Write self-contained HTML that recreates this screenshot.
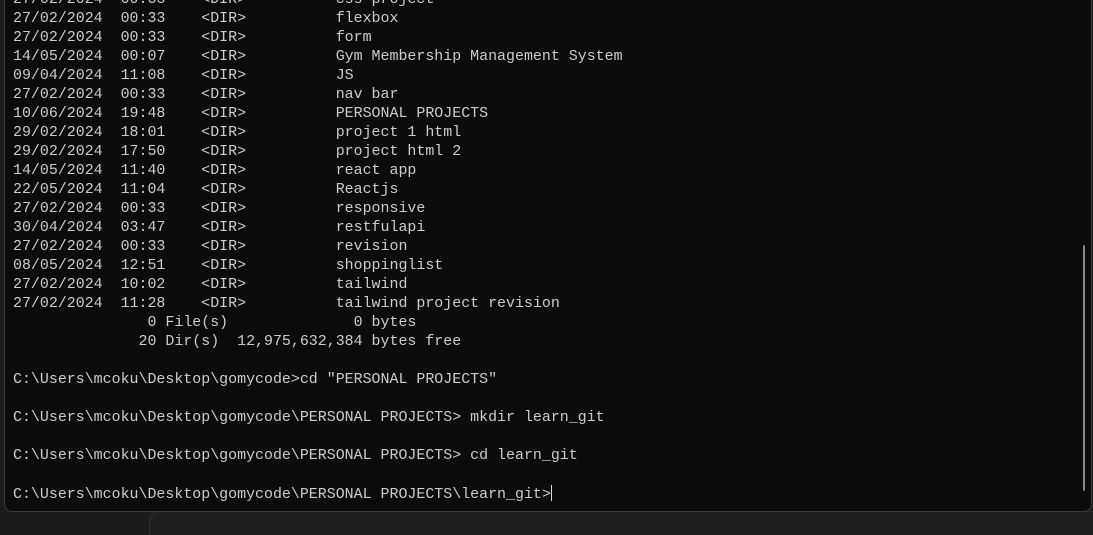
<!DOCTYPE html>
<html><head><style>
html,body{margin:0;padding:0;width:1093px;height:535px;overflow:hidden;background:#1b1b1b;position:relative;}
.win{position:absolute;left:4px;top:-10px;width:1086px;height:520px;background:#0c0c0c;border:1px solid #3a3a3a;border-radius:0 0 8px 8px;overflow:hidden;}
.win2{position:absolute;left:149px;top:511px;width:960px;height:40px;background:#1f1f1f;border:1px solid #2e2e2e;border-radius:10px;}
pre{position:absolute;left:8px;top:-0.5px;margin:0;font-family:"Liberation Mono",monospace;font-size:14.95px;line-height:19px;color:#cccccc;}
.sb{position:absolute;left:1083px;top:245px;width:2px;height:246px;background:#8a8a8a;border-radius:1px;}
.cur{display:inline-block;width:1px;height:16px;background:#ddd;vertical-align:-3px;}
</style></head><body>
<div class="win2"></div>
<div class="win">
<pre>27/02/2024  00:33    &lt;DIR&gt;          css project
27/02/2024  00:33    &lt;DIR&gt;          flexbox
27/02/2024  00:33    &lt;DIR&gt;          form
14/05/2024  00:07    &lt;DIR&gt;          Gym Membership Management System
09/04/2024  11:08    &lt;DIR&gt;          JS
27/02/2024  00:33    &lt;DIR&gt;          nav bar
10/06/2024  19:48    &lt;DIR&gt;          PERSONAL PROJECTS
29/02/2024  18:01    &lt;DIR&gt;          project 1 html
29/02/2024  17:50    &lt;DIR&gt;          project html 2
14/05/2024  11:40    &lt;DIR&gt;          react app
22/05/2024  11:04    &lt;DIR&gt;          Reactjs
27/02/2024  00:33    &lt;DIR&gt;          responsive
30/04/2024  03:47    &lt;DIR&gt;          restfulapi
27/02/2024  00:33    &lt;DIR&gt;          revision
08/05/2024  12:51    &lt;DIR&gt;          shoppinglist
27/02/2024  10:02    &lt;DIR&gt;          tailwind
27/02/2024  11:28    &lt;DIR&gt;          tailwind project revision
               0 File(s)              0 bytes
              20 Dir(s)  12,975,632,384 bytes free

C:\Users\mcoku\Desktop\gomycode&gt;cd "PERSONAL PROJECTS"

C:\Users\mcoku\Desktop\gomycode\PERSONAL PROJECTS&gt; mkdir learn_git

C:\Users\mcoku\Desktop\gomycode\PERSONAL PROJECTS&gt; cd learn_git

C:\Users\mcoku\Desktop\gomycode\PERSONAL PROJECTS\learn_git&gt;<span class="cur"></span></pre>
</div>
<div class="sb"></div>
</body></html>
